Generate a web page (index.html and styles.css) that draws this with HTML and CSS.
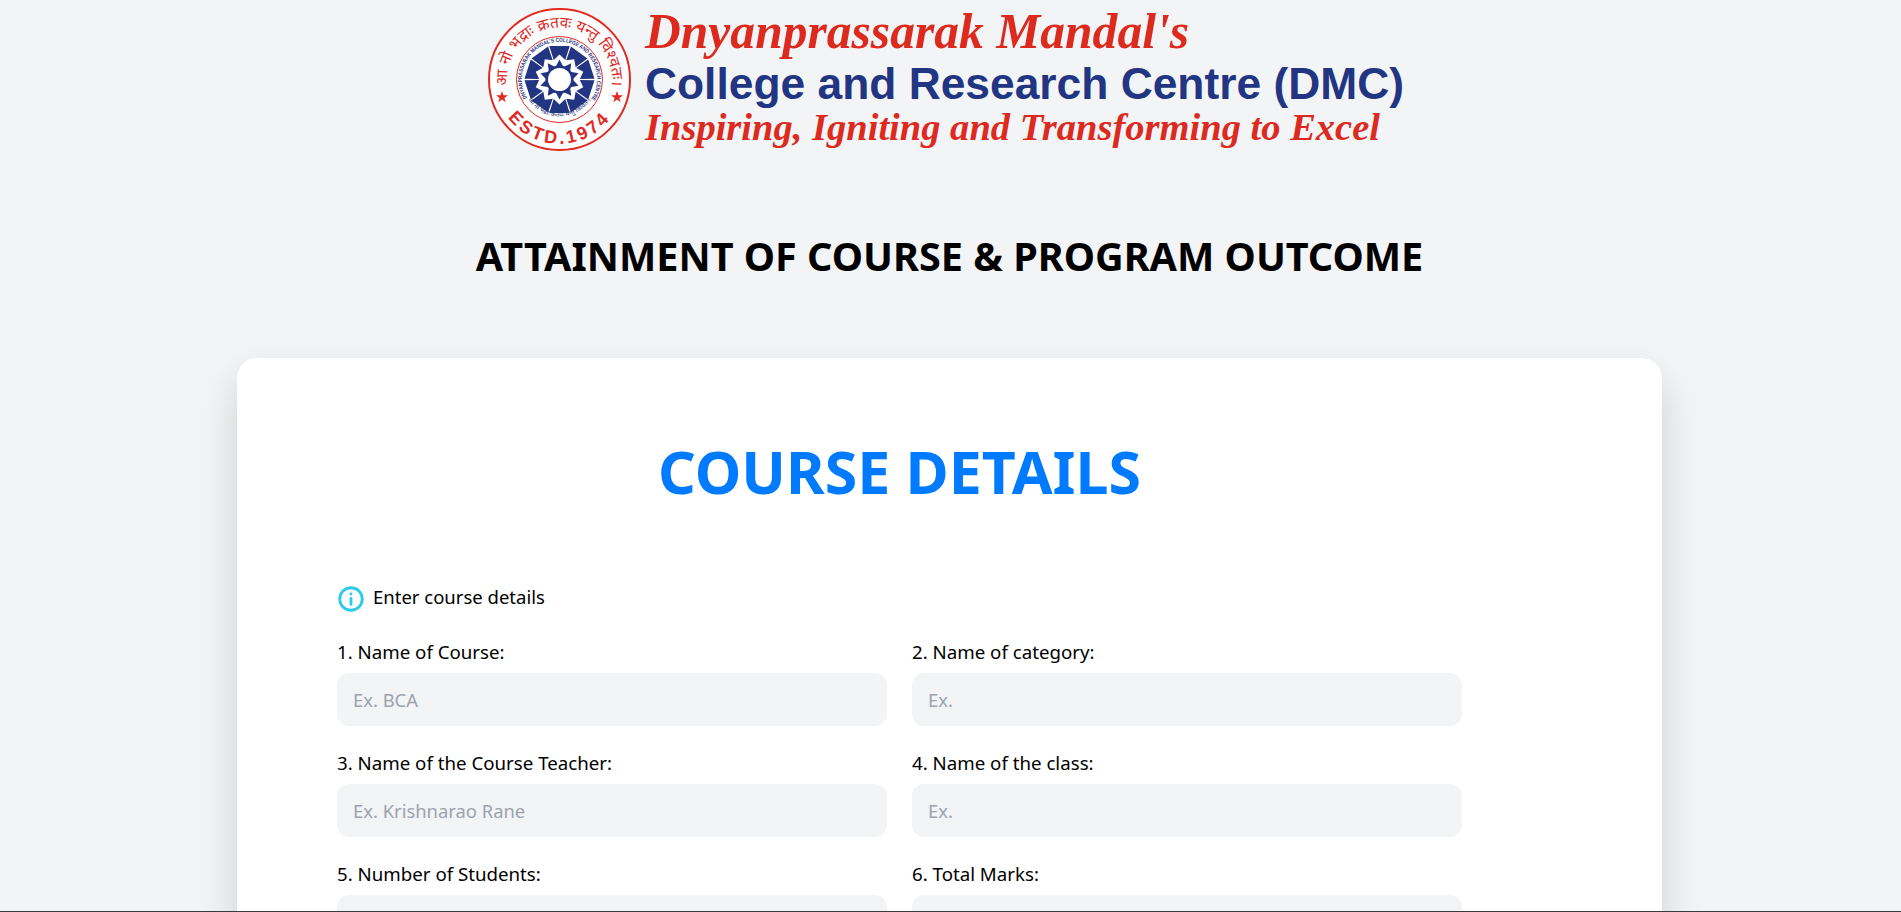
FILE: index.html
```html
<!DOCTYPE html>
<html lang="en">

<head>
    <meta charset="UTF-8">
    <meta name="viewport" content="width=device-width, initial-scale=1.0">
    <title>Attainment of Course &amp; Program Outcome</title>
    <link rel="stylesheet" href="styles.css">
</head>

<body>
    <header class="logo_wrap">
        <svg class="logo" viewBox="469 0 961 160" width="961" height="160" role="img" aria-label="DMC logo">
            <defs>
                <path id="arc_top" d="M 507.6 88 A 52.5 52.5 0 1 1 611.4 88"/>
                <path id="arc_bottom" d="M 498 97.5 A 64 64 0 0 0 621 97.5"/>
                <path id="arc_in_top" d="M 527 98 A 37.5 37.5 0 1 1 592 98"/>
                <path id="arc_in_bottom" d="M 528 100 A 38 38 0 0 0 591 100"/>
                <polygon id="blade" points="-10.2,-33.5 10.2,-33.5 5.8,-19.5 0,-25 -5.8,-19.5"/>
                <polygon id="tip" points="-4,-12.5 0,-20 4,-12.5"/>
                <polygon id="star" points="0,-6 1.5,-1.8 6,-1.8 2.4,0.9 3.7,5.2 0,2.6 -3.7,5.2 -2.4,0.9 -6,-1.8 -1.5,-1.8"/>
            </defs>

            <!-- seal -->
            <circle class="ring" cx="559.5" cy="79.5" r="70.5"/>
            <circle class="ring_thin" cx="559.5" cy="79.5" r="43"/>
            <text class="seal_hindi"><textPath href="#arc_top" startOffset="50%">आ नो भद्राः क्रतवः यन्तु विश्वतः।</textPath></text>
            <text class="seal_estd"><textPath href="#arc_bottom" startOffset="50%">ESTD.1974</textPath></text>
            <text class="seal_name"><textPath href="#arc_in_top" textLength="158" lengthAdjust="spacingAndGlyphs">DNYANPRASSARAK MANDAL'S COLLEGE AND RESEARCH CENTRE</textPath></text>
            <text class="seal_hindi_small"><textPath href="#arc_in_bottom" startOffset="50%">आ नो भद्राः क्रतवः यन्तु विश्वतः।</textPath></text>
            <use class="seal_star" href="#star" x="502" y="97"/>
            <use class="seal_star" href="#star" x="617" y="97"/>

            <g class="wheel" transform="translate(559.5 79.5)">
                <use href="#blade"/>
                <use href="#blade" transform="rotate(36)"/>
                <use href="#blade" transform="rotate(72)"/>
                <use href="#blade" transform="rotate(108)"/>
                <use href="#blade" transform="rotate(144)"/>
                <use href="#blade" transform="rotate(180)"/>
                <use href="#blade" transform="rotate(216)"/>
                <use href="#blade" transform="rotate(252)"/>
                <use href="#blade" transform="rotate(288)"/>
                <use href="#blade" transform="rotate(324)"/>
                <circle r="14"/>
                <use href="#tip"/>
                <use href="#tip" transform="rotate(36)"/>
                <use href="#tip" transform="rotate(72)"/>
                <use href="#tip" transform="rotate(108)"/>
                <use href="#tip" transform="rotate(144)"/>
                <use href="#tip" transform="rotate(180)"/>
                <use href="#tip" transform="rotate(216)"/>
                <use href="#tip" transform="rotate(252)"/>
                <use href="#tip" transform="rotate(288)"/>
                <use href="#tip" transform="rotate(324)"/>
                <circle class="hub" r="11.5"/>
            </g>

            <!-- name -->
            <text class="logo_script logo_top" x="645" y="48" textLength="544" lengthAdjust="spacingAndGlyphs">Dnyanprassarak Mandal's</text>
            <text class="logo_name" x="645" y="99" textLength="759" lengthAdjust="spacingAndGlyphs">College and Research Centre (DMC)</text>
            <text class="logo_script logo_bottom" x="645" y="140" textLength="735" lengthAdjust="spacingAndGlyphs">Inspiring, Igniting and Transforming to Excel</text>
        </svg>
    </header>

    <h1 class="page_title">ATTAINMENT OF COURSE &amp; PROGRAM OUTCOME</h1>

    <main class="card">
        <form class="course_form">
            <h2 class="form_title">COURSE DETAILS</h2>

            <p class="note">
                <svg class="note_icon" viewBox="0 0 24 24" width="26" height="26" fill="none" stroke="currentColor" stroke-width="2.6" stroke-linecap="round">
                    <circle cx="12" cy="12" r="10.4"/>
                    <path d="M12 11.4v5.6"/>
                    <path d="M12 7.3v.2"/>
                </svg>
                <span class="note_text">Enter course details</span>
            </p>

            <div class="fields">
                <div class="field">
                    <label for="course">1. Name of Course:</label>
                    <input id="course" type="text" placeholder="Ex. BCA">
                </div>
                <div class="field">
                    <label for="category">2. Name of category:</label>
                    <input id="category" type="text" placeholder="Ex.">
                </div>
                <div class="field">
                    <label for="teacher">3. Name of the Course Teacher:</label>
                    <input id="teacher" type="text" placeholder="Ex. Krishnarao Rane">
                </div>
                <div class="field">
                    <label for="class">4. Name of the class:</label>
                    <input id="class" type="text" placeholder="Ex.">
                </div>
                <div class="field">
                    <label for="students">5. Number of Students:</label>
                    <input id="students" type="text">
                </div>
                <div class="field">
                    <label for="marks">6. Total Marks:</label>
                    <input id="marks" type="text">
                </div>
            </div>
        </form>
    </main>

    <div class="bottom_line"></div>
</body>

</html>
```

FILE: styles.css
```css
* {
    margin: 0;
    padding: 0;
    box-sizing: border-box;
}

html,
body {
    height: 100%;
    overflow: hidden;
}

body {
    padding-right: 2px;
    background: #f3f4f6;
    color: #000;
    font-family: "Noto Sans", "Open Sans", sans-serif;
    font-size: 18.5px;
    line-height: 27px;
}

/* logo */
.logo_wrap {
    display: flex;
    justify-content: center;
    height: 160px;
}

.logo {
    display: block;
    flex: none;
}

.ring {
    fill: #fff;
    stroke: #e0291f;
    stroke-width: 2;
}

.ring_thin {
    fill: #fff;
    stroke: #e0291f;
    stroke-width: 1;
}

.seal_hindi,
.seal_hindi_small,
.seal_estd {
    text-anchor: middle;
}

.seal_hindi {
    fill: #e0291f;
    font-size: 15.5px;
}

.seal_hindi_small {
    fill: #27347f;
    font-size: 6.5px;
}

.seal_estd {
    fill: #e0291f;
    font-family: "Liberation Sans", sans-serif;
    font-size: 18px;
    font-weight: 700;
    letter-spacing: 3px;
}

.seal_name {
    fill: #27347f;
    font-family: "Liberation Sans", sans-serif;
    font-size: 5.6px;
    font-weight: 700;
}

.seal_star {
    fill: #e0291f;
}

.wheel {
    fill: #223582;
}

.hub {
    fill: #fff;
}

.logo_script {
    fill: #dc2a1f;
    font-family: "Liberation Serif", serif;
    font-style: italic;
    font-weight: 700;
}

.logo_top {
    font-size: 50px;
}

.logo_bottom {
    font-size: 38px;
}

.logo_name {
    fill: #223582;
    font-family: "Liberation Sans", sans-serif;
    font-size: 45px;
    font-weight: 700;
}

/* title */
.page_title {
    margin-top: 66px;
    font-size: 39.6px;
    line-height: 60px;
    font-weight: 700;
    text-align: center;
}

/* card */
.card {
    width: 1425px;
    margin: 72px auto 0;
    padding: 69px 100px 60px;
    background: #fff;
    border-radius: 20px;
    box-shadow: 0 20px 40px rgba(0, 0, 0, 0.15);
}

.course_form {
    width: 1125px;
}

.form_title {
    margin-bottom: 70px;
    color: #007bff;
    font-size: 59px;
    line-height: 88px;
    font-weight: 700;
    text-align: center;
}

.note {
    display: flex;
    align-items: center;
    gap: 9px;
    height: 27px;
    margin-bottom: 28px;
}

.note_icon {
    margin-left: 1px;
    color: #2ccbe9;
    flex: none;
}

.note_text {
    margin-bottom: 4px;
}

.fields {
    display: grid;
    grid-template-columns: 550px 550px;
    gap: 25px;
}

.field label {
    display: block;
    margin-bottom: 10px;
    font-size: 18.7px;
    line-height: 23px;
}

.field input {
    display: block;
    width: 100%;
    height: 53px;
    padding: 0 16px;
    border: none;
    border-radius: 12px;
    background: #f3f4f6;
    font-family: inherit;
    font-size: 18.4px;
}

.field input::placeholder {
    color: #9ca3af;
    opacity: 1;
}

/* edge of the window */
.bottom_line {
    position: fixed;
    left: 0;
    right: 0;
    bottom: 0;
    height: 1px;
    background: #3a3a3c;
}
```
